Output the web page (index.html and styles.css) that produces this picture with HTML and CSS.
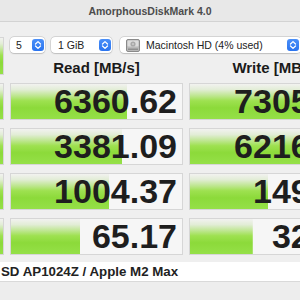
FILE: index.html
```html
<!DOCTYPE html>
<html>
<head>
<meta charset="utf-8">
<link rel="stylesheet" href="styles.css">
</head>
<body>
<div class="titlebar">AmorphousDiskMark 4.0</div>
<div class="content">
  <div class="grid">
    <div class="cell side all"></div>
    <div class="popups">
      <div class="popup p1"><span class="ptext">5</span><span class="stepper"><svg width="12" height="12" viewBox="0 0 12 12"><path d="M3.5 5 L6 2.6 L8.5 5 M3.5 7 L6 9.4 L8.5 7" fill="none" stroke="#fff" stroke-width="1.3" stroke-linecap="round" stroke-linejoin="round"/></svg></span></div>
      <div class="popup p2"><span class="ptext">1 GiB</span><span class="stepper"><svg width="12" height="12" viewBox="0 0 12 12"><path d="M3.5 5 L6 2.6 L8.5 5 M3.5 7 L6 9.4 L8.5 7" fill="none" stroke="#fff" stroke-width="1.3" stroke-linecap="round" stroke-linejoin="round"/></svg></span></div>
      <div class="popup p3"><svg class="disk" width="14" height="13" viewBox="0 0 14 13"><rect x="0.5" y="0.5" width="13" height="12" rx="1.5" fill="#b9b9b9" stroke="#8a8a8a"/><rect x="1.5" y="1.5" width="11" height="6" rx="1" fill="#dcdcdc"/><circle cx="7" cy="5" r="2.6" fill="#a9a9a9"/><circle cx="7" cy="5" r="0.8" fill="#e5e5e5"/><rect x="2" y="9.5" width="10" height="1.5" fill="#8f8f8f"/></svg><span class="ptext">Macintosh HD (4% used)</span><span class="stepper"><svg width="12" height="12" viewBox="0 0 12 12"><path d="M3.5 5 L6 2.6 L8.5 5 M3.5 7 L6 9.4 L8.5 7" fill="none" stroke="#fff" stroke-width="1.3" stroke-linecap="round" stroke-linejoin="round"/></svg></span></div>
    </div>
    <div class="head">Read [MB/s]</div>
    <div class="head">Write [MB/s]</div>

    <div class="cell side"></div>
    <div class="cell val" style="background-size:68% 100%">6360.62</div>
    <div class="cell val" style="background-size:100% 100%">7305.44</div>

    <div class="cell side"></div>
    <div class="cell val" style="background-size:65% 100%">3381.09</div>
    <div class="cell val" style="background-size:92% 100%">6216.85</div>

    <div class="cell side"></div>
    <div class="cell val" style="background-size:57.5% 100%">1004.37</div>
    <div class="cell val" style="background-size:45.5% 100%">149.55</div>

    <div class="cell side"></div>
    <div class="cell val" style="background-size:40.5% 100%">65.17</div>
    <div class="cell val" style="background-size:36.5% 100%">32.47</div>
  </div>
  <div class="footer">SD AP1024Z / Apple M2 Max</div>
</div>
</body>
</html>
```
FILE: styles.css
```css
html, body {
  margin: 0;
  padding: 0;
}
body {
  width: 300px;
  height: 300px;
  overflow: hidden;
  background: #ededed;
  font-family: "Liberation Sans", Arial, sans-serif;
}
.titlebar {
  height: 21px;
  line-height: 22px;
  border-bottom: 1px solid #d3d3d3;
  background: #e8e8e8;
  text-align: center;
  font-size: 10.5px;
  font-weight: bold;
  color: #4c4c4c;
}
.content {
  padding-top: 15px;
  background: #efefef;
}
.grid {
  display: grid;
  grid-template-columns: 44px 173px 174px;
  grid-template-rows: 16px 14px 37px 37px 37px 37px;
  column-gap: 6px;
  row-gap: 8px;
  margin-left: -40px;
  width: 403px;
}
.cell {
  box-sizing: border-box;
  border: 1px solid #d6d6d6;
  background-color: #f6f6f6;
  background-image: linear-gradient(to bottom, #f2f2f0 0%, #e2edd6 16%, #bde68e 34%, #9ee150 48%, #8cda3a 68%, #95e048 100%);
  background-repeat: no-repeat;
  background-size: 100% 100%;
}
.all {
  grid-row: 1 / 3;
}
.popups {
  grid-column: 2 / 4;
  grid-row: 1;
  display: flex;
  align-items: stretch;
}
.popup {
  box-sizing: border-box;
  height: 16px;
  background: #fff;
  border-radius: 4px;
  box-shadow: 0 0 0 0.5px rgba(0,0,0,0.18), 0 0.5px 1.5px rgba(0,0,0,0.12);
  display: flex;
  align-items: center;
  padding: 0 1px 0 6px;
  font-size: 10.5px;
  color: #222;
}
.ptext {
  flex: 1;
  white-space: nowrap;
}
.p1 { width: 35px; margin-right: 6px; }
.p2 { width: 61px; margin-right: 8px; padding-left: 7px; }
.p3 { width: 181px; padding-left: 6px; padding-right: 2px; }
.disk { margin-right: 6px; flex: none; }
.stepper {
  width: 12px;
  height: 12px;
  border-radius: 3px;
  background: linear-gradient(to bottom, #4a8ff8, #2a74ef);
  display: flex;
  flex: none;
}
.head {
  grid-row: 2;
  text-align: center;
  font-size: 15px;
  font-weight: bold;
  line-height: 14px;
  color: #1a1a1a;
  white-space: nowrap;
}
.val {
  display: flex;
  align-items: center;
  justify-content: flex-end;
  padding-right: 5px;
  font-size: 34px;
  font-weight: bold;
  line-height: 37px;
  color: #1e1e1e;
  white-space: nowrap;
}
.footer {
  margin-top: 7px;
  height: 20px;
  box-sizing: border-box;
  background: #fff;
  border-bottom: 1px solid #d9d9d9;
  padding-left: 1px;
  font-size: 13.3px;
  font-weight: bold;
  line-height: 20px;
  color: #222;
  white-space: nowrap;
}
```
